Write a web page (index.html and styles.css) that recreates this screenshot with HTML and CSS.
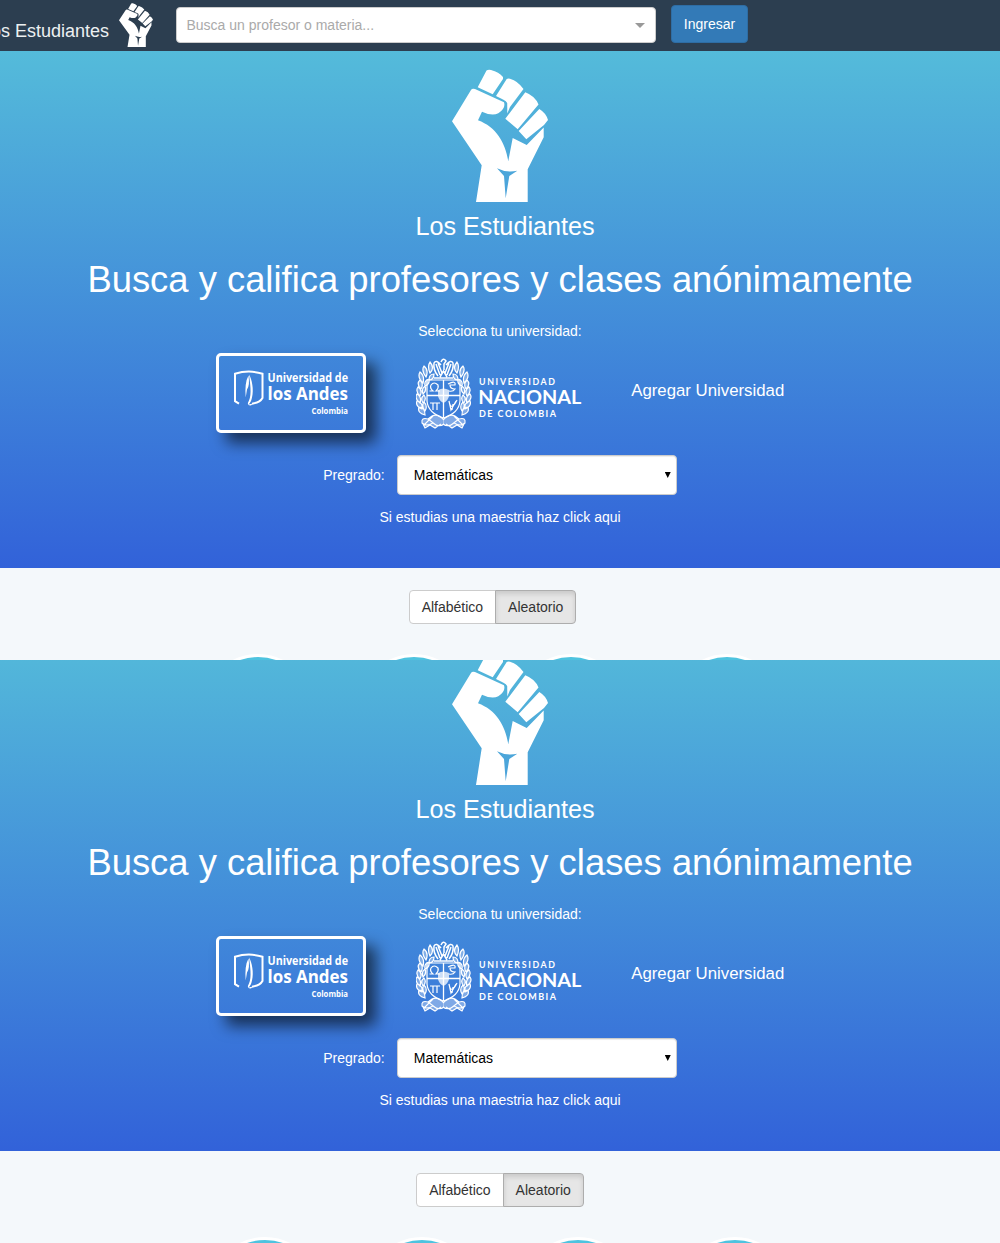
FILE: index.html
```html
<!DOCTYPE html>
<html lang="es">
<head>
<meta charset="utf-8">
<title>Los Estudiantes</title>
<link rel="stylesheet" href="styles.css">
</head>
<body>
<svg class="defs" aria-hidden="true">
  <symbol id="fist" viewBox="0 0 96 133" preserveAspectRatio="none">
    <path fill="#fff" fill-rule="evenodd" d="M34.5 1.5Q36 .5 39 1Q47 3 51 8L51 10L40.7 25.3L25.7 18.3ZM54.7 10Q56 9 58 9.7Q66 12 71.5 20L58 38L55.3 44.5L55.2 34Q54.5 32 51 30.5L44 27ZM73.3 23.3Q83 27 86.5 35.5L65.7 60.3L53.3 49.7ZM87.3 40Q94 44 96 51L92 56L74.3 70.3L66.7 62ZM0 52.3L19 21Q20 19.3 23 20L52 33.3Q54 39 46.3 44.3Q40 47.5 30 42.7L26 51.3C44 58 53 73 56.3 92L60.7 69L74.7 76L91.7 58.5V68.3L75.7 100.3V133H24L29.7 96.3ZM45 99.3Q54 104 65.3 101.7L57.3 107L53.7 129.3L52 107Z"/>
  </symbol>
  <symbol id="andes-mark" viewBox="0 0 32 38">
    <path fill="none" stroke="#fff" stroke-width="2" d="M6 34.2L2 31.7V4.2Q16 0 29.5 4.2V28.5Q27 33 19 34.2"/>
    <path fill="#fff" d="M16 5C19 10 21 20 19 28Q18 33 15.5 35L20 34L18 36Q13 36 16 31C19 25 17 13 16 5ZM15.5 6Q17 16 14 20L12.7 28Q11.5 13 15.5 6Z"/>
  </symbol>
  <symbol id="wreath" viewBox="0 0 56 72" overflow="visible">
    <g fill="#fff" fill-opacity=".35" stroke="#fff" stroke-width="1.2">
      <path d="M9 57Q1 55 3 49Q9 49 9 57ZM6 51Q-1 48 1 43Q7 44 6 51ZM4 45Q-2 40 1 36Q6 39 4 45ZM4 38Q-1 33 2 29Q7 32 4 38ZM5 31Q0 26 4 22Q8 26 5 31ZM7 25Q1 19 4 14Q9 18 7 25ZM10 19Q5 12 8 8Q13 12 10 19ZM14 15Q11 8 14 4Q19 10 14 15ZM9 53Q12 48 8 44Q5 48 9 53ZM7 45Q11 41 8 37Q4 40 7 45ZM7 36Q11 33 9 28Q5 31 7 36ZM9 28Q14 26 13 21Q8 22 9 28ZM13 22Q18 22 18 16Q13 16 13 22Z"/>
      <path d="M28 62Q22 55 16 58L12 61Q5 59 6 65Q10 69 17 65Q23 70 28 66M7 66L9 70L14 67L19 70L25 66M12 61L20 67M17 58L8 67" stroke-width="1.1"/>
    </g>
  </symbol>
  <symbol id="nacional-crest" viewBox="0 0 56 72">
    <use href="#wreath" width="56" height="72"/>
    <use href="#wreath" width="56" height="72" transform="translate(55 0) scale(-1 1)"/>
    <g fill="none" stroke="#fff">
      <path d="M11 22H44V43Q43 55 27.5 60Q12 55 11 43Z" stroke-width="1.2"/>
      <path d="M11 37.5H44M27.5 22V60" stroke-width="1.3"/>
      <path d="M13.5 33H17Q13.5 30 15 27Q18 23 22 27Q23 30 20 33H24M32 26Q40 22 39 27H34Q34 31 39 31Q37 34 33 33M17 45V52M21 45V52M14 45H24M33 43Q35 54 41 42M33 43L35 52L40 43M37 46L36 52" stroke-width="1.2"/>
      <path d="M25 4Q27 -1 30 3L28 6V12M25 7Q20 1 18 5Q17 12 22 18M30 7Q35 1 37 5Q38 12 33 18M20 6L24 17M35 6L31 17M22 5L26 15M33 5L29 15M24 19L27.5 13L31 19M18 20H37" stroke-width="1.5"/>
    </g>
    <path fill="#fff" d="M22 32Q27.5 29 33 32V38Q32 43 27.5 45Q23 43 22 38Z" opacity=".75"/>
  </symbol>
</svg>

<header class="navbar">
  <a class="brand"><span>Los Estudiantes</span><svg class="brand-logo"><use href="#fist"/></svg></a>
  <div class="search"><span>Busca un profesor o materia...</span><i class="arrow"></i></div>
  <button class="login">Ingresar</button>
</header>

<main>
  <div class="view first">
    <section class="hero">
      <svg class="fist"><use href="#fist"/></svg>
      <h2>Los Estudiantes</h2>
      <h1>Busca y califica profesores y clases anónimamente</h1>
      <p class="choose">Selecciona tu universidad:</p>
      <div class="universities">
        <a class="andes"><svg viewBox="0 0 126 56">
          <use href="#andes-mark" x="5" y="5.5" width="32" height="38"/>
          <text class="andes-top" x="39.5" y="18.3" textLength="80.5" lengthAdjust="spacingAndGlyphs">Universidad de</text>
          <text class="andes-name" x="39.5" y="36.3" textLength="80.5" lengthAdjust="spacingAndGlyphs">los Andes</text>
          <text class="andes-country" x="83.5" y="50" textLength="36.5" lengthAdjust="spacingAndGlyphs">Colombia</text>
        </svg></a>
        <svg class="nacional" viewBox="0 0 166 72">
          <use href="#nacional-crest" width="56" height="72"/>
          <text class="nacional-top" x="63" y="27.3" textLength="76">UNIVERSIDAD</text>
          <text class="nacional-name" x="62.3" y="45.7" textLength="103" lengthAdjust="spacingAndGlyphs">NACIONAL</text>
          <text class="nacional-country" x="63" y="58.7" textLength="77">DE COLOMBIA</text>
        </svg>
        <a class="add">Agregar Universidad</a>
      </div>
      <div class="program"><span>Pregrado:</span><div class="select"><span>Matemáticas</span><i></i></div></div>
      <p class="master">Si estudias una maestria haz click aqui</p>
    </section>
    <section class="list">
      <div class="toggle"><button>Alfabético</button><button class="active">Aleatorio</button></div>
      <div class="circles"><i></i><i></i><i></i><i></i></div>
    </section>
  </div>
  <div class="view second">
    <section class="hero">
      <svg class="fist"><use href="#fist"/></svg>
      <h2>Los Estudiantes</h2>
      <h1>Busca y califica profesores y clases anónimamente</h1>
      <p class="choose">Selecciona tu universidad:</p>
      <div class="universities">
        <a class="andes"><svg viewBox="0 0 126 56">
          <use href="#andes-mark" x="5" y="5.5" width="32" height="38"/>
          <text class="andes-top" x="39.5" y="18.3" textLength="80.5" lengthAdjust="spacingAndGlyphs">Universidad de</text>
          <text class="andes-name" x="39.5" y="36.3" textLength="80.5" lengthAdjust="spacingAndGlyphs">los Andes</text>
          <text class="andes-country" x="83.5" y="50" textLength="36.5" lengthAdjust="spacingAndGlyphs">Colombia</text>
        </svg></a>
        <svg class="nacional" viewBox="0 0 166 72">
          <use href="#nacional-crest" width="56" height="72"/>
          <text class="nacional-top" x="63" y="27.3" textLength="76">UNIVERSIDAD</text>
          <text class="nacional-name" x="62.3" y="45.7" textLength="103" lengthAdjust="spacingAndGlyphs">NACIONAL</text>
          <text class="nacional-country" x="63" y="58.7" textLength="77">DE COLOMBIA</text>
        </svg>
        <a class="add">Agregar Universidad</a>
      </div>
      <div class="program"><span>Pregrado:</span><div class="select"><span>Matemáticas</span><i></i></div></div>
      <p class="master">Si estudias una maestria haz click aqui</p>
    </section>
    <section class="list">
      <div class="toggle"><button>Alfabético</button><button class="active">Aleatorio</button></div>
      <div class="circles"><i></i><i></i><i></i><i></i></div>
    </section>
  </div>
</main>
</body>
</html>
```
FILE: styles.css
```css
* { box-sizing: border-box; }
body { margin: 0; height: 1243px; overflow: hidden; background: #f4f8fb; font: 14px/20px "Liberation Sans", Arial, sans-serif; }
.defs { display: block; width: 0; height: 0; }
h1, h2, p { margin: 0; font-weight: 400; white-space: nowrap; }
button { font: inherit; }

.navbar { display: flex; height: 51px; background: #2c3e50; }
.brand { display: flex; justify-content: flex-end; width: 153px; flex: none; color: #ecf0f1; font-size: 18px; white-space: nowrap; }
.brand span { margin-top: 21px; }
.brand-logo { width: 34px; height: 44px; margin: 3px 0 0 10px; flex: none; }
.search { display: flex; align-items: center; justify-content: space-between; width: 480px; height: 36px; margin: 7px 0 0 23px; padding: 0 10px 0 9.5px; border: 1px solid #ccc; border-radius: 4px; background: #fff; color: #aaa; }
.arrow { border: 5px solid transparent; border-top-color: #999; border-bottom: 0; }
.login { width: 77px; height: 38px; margin: 5px 0 0 15px; padding: 0; border: 1px solid #2e6da4; border-radius: 4px; background: #337ab7; color: #fff; }

.view { overflow: hidden; }
.first { height: 609px; }
.second { display: flex; flex-direction: column; justify-content: flex-end; height: 583px; }
.hero { display: flex; flex-direction: column; align-items: center; flex: none; height: 517px; padding-top: 18px; background: linear-gradient(#54bbda, #3262d9); color: #fff; }
.fist { width: 96px; height: 133px; flex: none; }
.hero h2 { margin: 6px 0 0 10px; font-size: 25.2px; line-height: 36px; }
.hero h1 { margin-top: 16px; font-size: 36.4px; line-height: 40px; }
.choose { margin-top: 21px; }
.universities { display: flex; height: 80px; margin-top: 12px; }
.andes { display: flex; width: 150px; height: 80px; padding: 8px 9px; border: 3px solid #fff; border-radius: 5px; box-shadow: 10px 10px 15px rgba(0, 0, 0, .6); }
.andes svg { width: 126px; height: 56px; }
.andes text { fill: #fff; font-family: "Open Sans", sans-serif; font-weight: 700; }
.andes-top { font-size: 12.3px; }
.andes-name { font-size: 18px; }
.andes-country { font-size: 8.5px; }
.nacional { width: 166px; height: 72px; margin: 5px 0 0 50px; }
.nacional text { fill: #fff; font-family: Lato, sans-serif; font-weight: 700; }
.nacional-top { font-size: 8.8px; }
.nacional-name { font-size: 18px; }
.nacional-country { font-size: 9px; }
.add { margin: 28px 0 0 49.5px; font-size: 16.8px; }
.program { display: flex; align-items: center; gap: 12px; height: 40px; margin-top: 22px; }
.select { display: flex; align-items: center; justify-content: space-between; width: 280px; height: 40px; padding: 0 5px 0 16px; border: 1px solid #ccc; border-radius: 4px; background: #fff; box-shadow: inset 0 1px 1px rgba(0, 0, 0, .075); color: #000; }
.select i { width: 6px; height: 6px; background: #000; clip-path: polygon(0 0, 100% 0, 50% 100%); }
.master { margin-top: 12px; }

.list { flex: none; width: 985px; height: 92px; padding-top: 22px; overflow: hidden; }
.second .list { width: 1000px; }
.toggle { display: flex; justify-content: center; }
.toggle button { height: 34px; padding: 0 12px; border: 1px solid #ccc; border-radius: 4px 0 0 4px; background: #fff; color: #333; }
.toggle .active { margin-left: -1px; border-color: #adadad; border-radius: 0 4px 4px 0; background: #e6e6e6; box-shadow: inset 0 3px 5px rgba(0, 0, 0, .125); }
.circles { display: flex; justify-content: center; gap: 46.6px; margin-top: 30px; }
.circles i { width: 110px; height: 110px; flex: none; border: 3px solid #fff; border-radius: 50%; background: #4ec3df; }
```
